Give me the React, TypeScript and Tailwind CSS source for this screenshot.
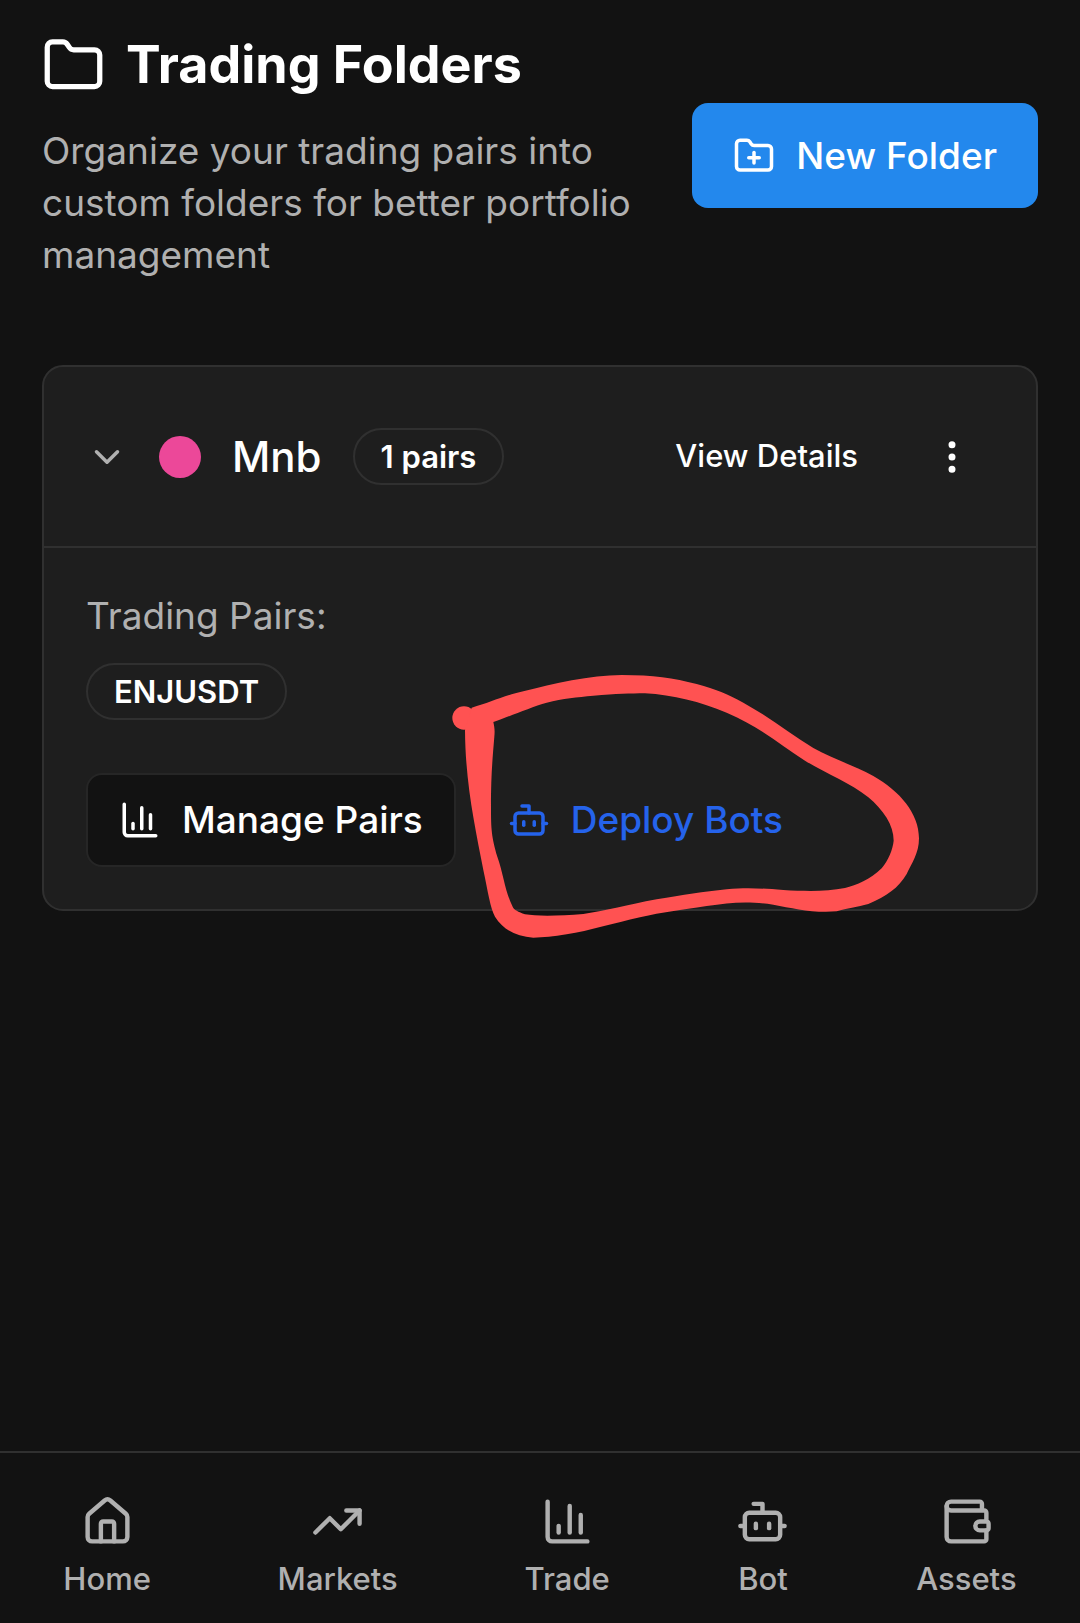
import {
  Bot,
  ChartColumn,
  ChevronDown,
  EllipsisVertical,
  Folder,
  FolderPlus,
  House,
  TrendingUp,
  Wallet,
} from "lucide-react";

const navItems = [
  { label: "Home", Icon: House },
  { label: "Markets", Icon: TrendingUp },
  { label: "Trade", Icon: ChartColumn },
  { label: "Bot", Icon: Bot },
  { label: "Assets", Icon: Wallet },
];

function Header() {
  return (
    <header className="flex items-center justify-between gap-8">
      <div>
        <h1 className="flex items-center gap-[21px] text-[52px] leading-[70px] font-bold">
          <Folder className="size-[63px] shrink-0" />
          Trading Folders
        </h1>
        <p className="mt-[25px] text-[37px] leading-[52px] text-[#b0b0b0]">
          Organize your trading pairs into custom folders for better portfolio management
        </p>
      </div>
      <button
        type="button"
        className="flex h-[105px] shrink-0 items-center gap-[21px] rounded-2xl bg-[#2388ed] px-[41px] text-[37px] font-medium"
      >
        <FolderPlus className="size-[42px]" />
        New Folder
      </button>
    </header>
  );
}

function Badge({ children }: { children: string }) {
  return (
    <span className="flex h-[57px] items-center rounded-full border-2 border-[#303030] px-[26px] text-[31px] leading-[42px] font-semibold">
      {children}
    </span>
  );
}

function Annotation() {
  return (
    <svg
      aria-hidden="true"
      viewBox="0 0 1500 930"
      className="pointer-events-none absolute top-[283px] left-[396px] h-[310px] w-[500px]"
      fill="#ff5252"
    >
      <circle cx="72" cy="204" r="35" />
      <path
        fillRule="evenodd"
        d="M95 173C150 158 190 137 250 124C340 101 450 75 545 75C640 75 700 84 770 102C830 118 860 132 910 158C990 202 1050 252 1120 294C1180 328 1240 345 1300 378C1380 424 1437 490 1437 565C1437 610 1415 640 1400 672C1375 715 1340 738 1285 762C1250 772 1230 772 1190 784C1120 790 1060 775 1000 764C920 752 870 758 800 768C720 780 670 786 600 802C520 820 450 842 380 853C340 860 310 862 280 863C230 860 190 840 165 800C150 770 145 730 130 660C105 530 76 400 75 240Z
        M160 216C200 203 270 172 320 158C370 145 410 142 460 137C530 132 570 130 615 130C700 135 780 155 860 188C960 230 1020 285 1095 332C1160 372 1230 398 1285 442C1330 480 1361 525 1361 572C1358 600 1345 630 1325 655C1290 690 1250 705 1215 714C1160 725 1100 724 1030 720C960 715 920 712 860 718C790 725 730 735 650 748C560 765 500 782 430 792C360 798 290 799 255 793C235 785 222 780 218 770C195 725 190 670 172 620C155 560 153 540 153 470C153 380 157 330 163 260C165 240 163 230 160 216Z"
      />
    </svg>
  );
}

function FolderCard() {
  return (
    <section className="relative mt-[84px] rounded-[21px] border-2 border-[#303030] bg-[#1e1e1e]">
      <div className="flex items-center justify-between border-b-2 border-[#303030] p-[42px]">
        <div className="flex items-center gap-[31px]">
          <button type="button" aria-label="Collapse folder">
            <ChevronDown className="size-[42px] text-[#b0b0b0]" />
          </button>
          <span className="size-[42px] rounded-full bg-[#ec4899]" />
          <h2 className="text-[42px] leading-[63px] font-medium">Mnb</h2>
          <Badge>1 pairs</Badge>
        </div>
        <div className="flex items-center gap-[21px]">
          <button type="button" className="h-[95px] px-[31px] text-[31px] font-medium">
            View Details
          </button>
          <button
            type="button"
            aria-label="Folder options"
            className="flex size-[84px] items-center justify-center"
          >
            <EllipsisVertical className="size-[42px]" />
          </button>
        </div>
      </div>
      <div className="p-[42px]">
        <h3 className="text-[37px] leading-[52px] text-[#b0b0b0]">Trading Pairs:</h3>
        <div className="mt-[21px] flex">
          <Badge>ENJUSDT</Badge>
        </div>
        <div className="mt-[53px] flex gap-[21px] text-[37px] font-medium">
          <button
            type="button"
            className="flex h-[94px] items-center gap-[21px] rounded-2xl border-2 border-[#262626] bg-[#121212] px-[31px]"
          >
            <ChartColumn className="size-[42px]" />
            Manage Pairs
          </button>
          <button
            type="button"
            className="flex h-[94px] items-center gap-[21px] px-[31px] text-[#2563eb]"
          >
            <Bot className="size-[42px]" />
            Deploy Bots
          </button>
        </div>
      </div>
      <Annotation />
    </section>
  );
}

function BottomNav() {
  return (
    <nav className="flex h-[172px] items-center justify-around border-t-2 border-[#303030] pt-[18px]">
      {navItems.map(({ label, Icon }) => (
        <a
          key={label}
          href="#"
          className="flex flex-col items-center gap-[10px] text-[31px] leading-[42px] font-medium text-[#b0b0b0]"
        >
          <Icon className="size-[53px]" />
          {label}
        </a>
      ))}
    </nav>
  );
}

export default function App() {
  return (
    <div className="flex min-h-screen flex-col bg-[#121212] font-['Inter',sans-serif] text-white">
      <main className="flex-1 px-[42px] pt-[30px]">
        <Header />
        <FolderCard />
      </main>
      <BottomNav />
    </div>
  );
}
